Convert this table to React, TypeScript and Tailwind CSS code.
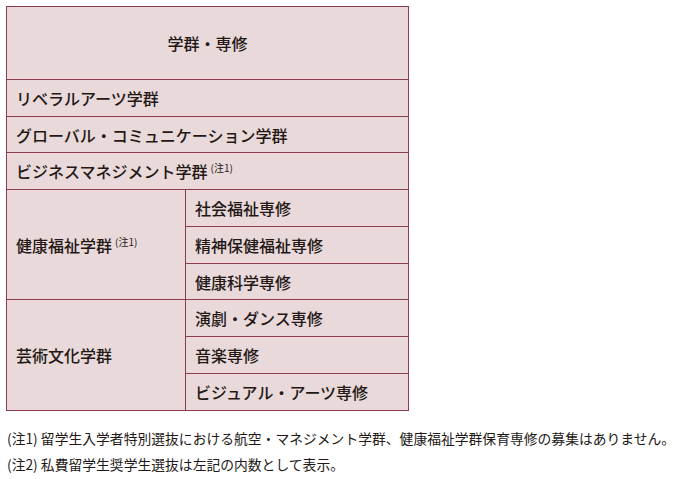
import React from "react";

const font = { fontFamily: '"Noto Sans CJK JP", "Noto Sans", sans-serif' };

const Note = () => (
  <span className="relative -top-[6px] ml-[3px] text-[10px] font-normal">(注1)</span>
);

export default function App() {
  const cell = "border border-[#8a3b4f] px-[9px] text-left align-middle";
  return (
    <div className="min-h-screen bg-white text-[#231815]" style={font}>
      <div className="pl-[6px] pt-[6px]">
        <table className="w-[403px] border-collapse bg-[#e9d9da] text-[16px] font-medium">
          <tbody>
            <tr className="h-[73px]">
              <td colSpan={2} className="border border-[#8a3b4f] text-center align-middle">
                学群・専修
              </td>
            </tr>
            <tr className="h-[37px]">
              <td colSpan={2} className={cell}>リベラルアーツ学群</td>
            </tr>
            <tr className="h-[36px]">
              <td colSpan={2} className={cell}>グローバル・コミュニケーション学群</td>
            </tr>
            <tr className="h-[37px]">
              <td colSpan={2} className={cell}>
                ビジネスマネジメント学群<Note />
              </td>
            </tr>
            <tr className="h-[37px]">
              <td rowSpan={3} className={`${cell} w-[179px]`}>
                健康福祉学群<Note />
              </td>
              <td className={cell}>社会福祉専修</td>
            </tr>
            <tr className="h-[37px]">
              <td className={cell}>精神保健福祉専修</td>
            </tr>
            <tr className="h-[36px]">
              <td className={cell}>健康科学専修</td>
            </tr>
            <tr className="h-[37px]">
              <td rowSpan={3} className={cell}>芸術文化学群</td>
              <td className={cell}>演劇・ダンス専修</td>
            </tr>
            <tr className="h-[37px]">
              <td className={cell}>音楽専修</td>
            </tr>
            <tr className="h-[37px]">
              <td className={cell}>ビジュアル・アーツ専修</td>
            </tr>
          </tbody>
        </table>
      </div>
      <div className="mt-[14px] whitespace-nowrap pl-[7px] text-[13.8px] leading-[26px] text-[#231815]">
        <p>(注1) 留学生入学者特別選抜における航空・マネジメント学群、健康福祉学群保育専修の募集はありません。</p>
        <p>(注2) 私費留学生奨学生選抜は左記の内数として表示。</p>
      </div>
    </div>
  );
}
